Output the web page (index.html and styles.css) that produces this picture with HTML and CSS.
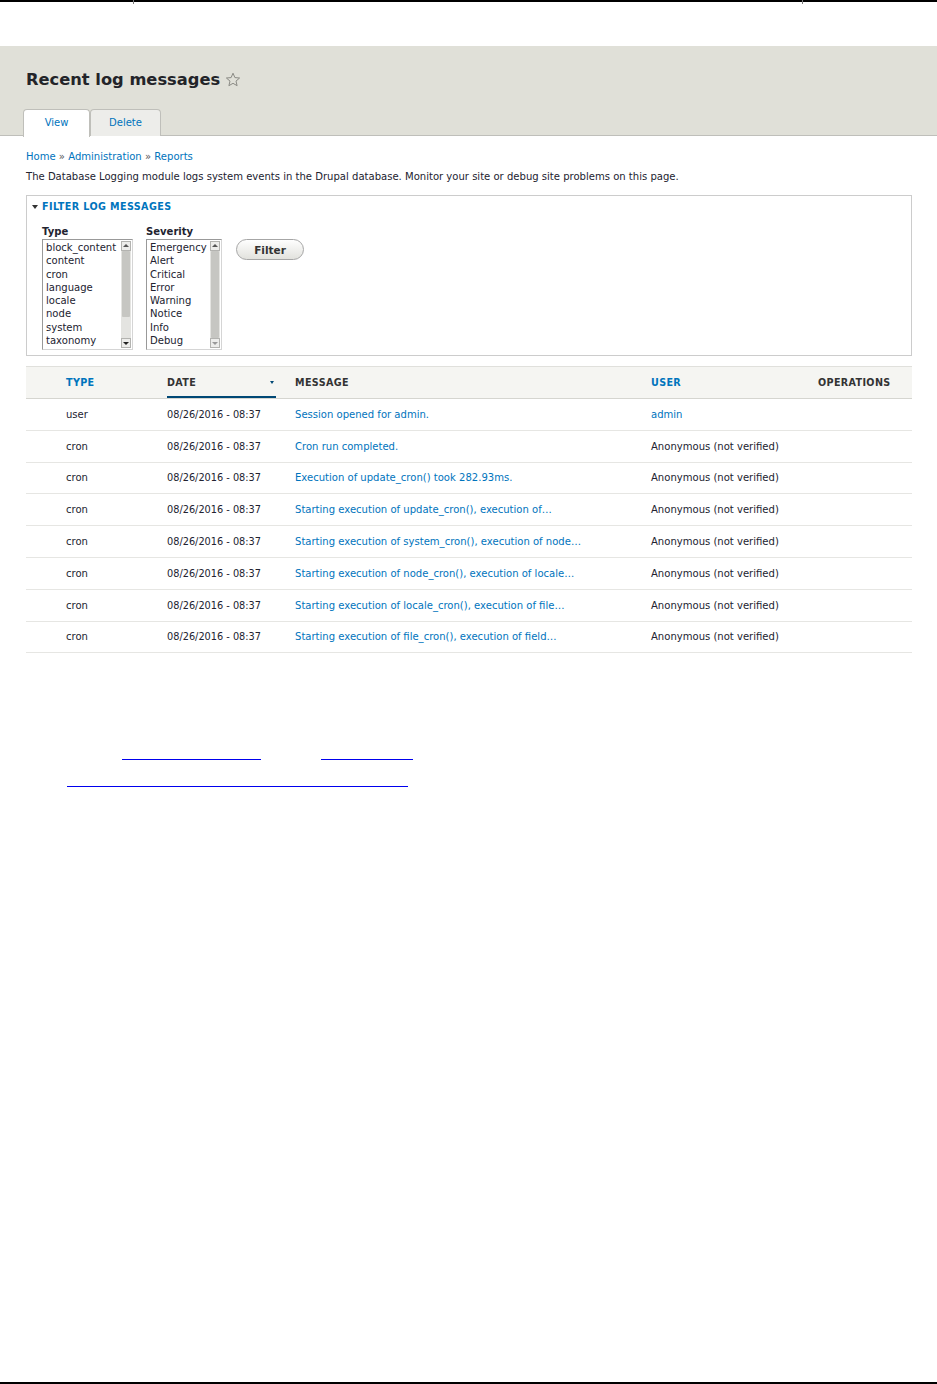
FILE: index.html
```html
<!DOCTYPE html>
<html>
<head>
    <meta charset="UTF-8">
    <title>Recent log messages</title>
    <link rel="stylesheet" href="styles.css">
</head>
<body>
<div class="page">
    <div class="frame-top">
        <span class="seg seg-a"></span>
        <span class="tick"></span>
        <span class="seg seg-b"></span>
        <span class="tick"></span>
        <span class="seg seg-c"></span>
    </div>

    <header class="page-header">
        <h1 class="page-title">Recent log messages
            <svg class="star" viewBox="0 0 16 16" fill="none" stroke="#8a8a84" stroke-width="1" stroke-linejoin="round">
                <path d="M8 1.2l1.9 4.4 4.7.4-3.6 3.1 1.1 4.6L8 11.3l-4.1 2.4 1.1-4.6L1.4 6l4.7-.4z"></path>
            </svg>
        </h1>
        <ul class="tabs">
            <li class="tab is-active"><a href="#">View</a></li>
            <li class="tab"><a href="#">Delete</a></li>
        </ul>
    </header>

    <main class="content">
        <nav class="breadcrumb">
            <a href="#">Home</a> &raquo; <a href="#">Administration</a> &raquo; <a href="#">Reports</a>
        </nav>
        <p class="help">The Database Logging module logs system events in the Drupal database. Monitor your site or debug site problems on this page.</p>

        <fieldset class="filter">
            <div class="legend"><span class="caret"></span>Filter log messages</div>
            <div class="filter-row">
                <div class="field">
                    <label>Type</label>
                    <div class="listbox listbox-type">
                        <ul class="options">
                            <li>block_content</li>
                            <li>content</li>
                            <li>cron</li>
                            <li>language</li>
                            <li>locale</li>
                            <li>node</li>
                            <li>system</li>
                            <li>taxonomy</li>
                        </ul>
                        <div class="scrollbar">
                            <span class="arrow up"></span>
                            <span class="track"><span class="thumb"></span></span>
                            <span class="arrow down"></span>
                        </div>
                    </div>
                </div>
                <div class="field">
                    <label>Severity</label>
                    <div class="listbox listbox-severity">
                        <ul class="options">
                            <li>Emergency</li>
                            <li>Alert</li>
                            <li>Critical</li>
                            <li>Error</li>
                            <li>Warning</li>
                            <li>Notice</li>
                            <li>Info</li>
                            <li>Debug</li>
                        </ul>
                        <div class="scrollbar">
                            <span class="arrow up"></span>
                            <span class="track"><span class="thumb full"></span></span>
                            <span class="arrow down disabled"></span>
                        </div>
                    </div>
                </div>
                <button class="button">Filter</button>
            </div>
        </fieldset>

        <table class="log-table">
            <colgroup>
                <col class="c-type">
                <col class="c-date">
                <col class="c-message">
                <col class="c-user">
                <col class="c-ops">
            </colgroup>
            <thead>
            <tr>
                <th class="col-type"><a href="#">Type</a></th>
                <th class="col-date is-active"><a href="#">Date<span class="sort"></span></a></th>
                <th>Message</th>
                <th><a href="#">User</a></th>
                <th>Operations</th>
            </tr>
            </thead>
            <tbody>
            <tr><td class="col-type">user</td><td class="date">08/26/2016 - 08:37</td><td><a href="#">Session opened for admin.</a></td><td><a href="#">admin</a></td><td></td></tr>
            <tr><td class="col-type">cron</td><td class="date">08/26/2016 - 08:37</td><td><a href="#">Cron run completed.</a></td><td>Anonymous (not verified)</td><td></td></tr>
            <tr><td class="col-type">cron</td><td class="date">08/26/2016 - 08:37</td><td><a href="#">Execution of update_cron() took 282.93ms.</a></td><td>Anonymous (not verified)</td><td></td></tr>
            <tr><td class="col-type">cron</td><td class="date">08/26/2016 - 08:37</td><td><a href="#">Starting execution of update_cron(), execution of…</a></td><td>Anonymous (not verified)</td><td></td></tr>
            <tr><td class="col-type">cron</td><td class="date">08/26/2016 - 08:37</td><td><a href="#">Starting execution of system_cron(), execution of node…</a></td><td>Anonymous (not verified)</td><td></td></tr>
            <tr><td class="col-type">cron</td><td class="date">08/26/2016 - 08:37</td><td><a href="#">Starting execution of node_cron(), execution of locale…</a></td><td>Anonymous (not verified)</td><td></td></tr>
            <tr><td class="col-type">cron</td><td class="date">08/26/2016 - 08:37</td><td><a href="#">Starting execution of locale_cron(), execution of file…</a></td><td>Anonymous (not verified)</td><td></td></tr>
            <tr><td class="col-type">cron</td><td class="date">08/26/2016 - 08:37</td><td><a href="#">Starting execution of file_cron(), execution of field…</a></td><td>Anonymous (not verified)</td><td></td></tr>
            </tbody>
        </table>

        <div class="pager">
            <div class="pager-line first">
                <a href="#" class="blank blank-a"></a>
                <a href="#" class="blank blank-b"></a>
            </div>
            <div class="pager-line second">
                <a href="#" class="blank blank-c"></a>
            </div>
        </div>
    </main>

    <div class="frame-bottom"></div>
</div>
</body>
</html>
```

FILE: styles.css
```css
:root {
    --link-color: #0074bd;
    --text-color: #222330;
    --header-bg: #e0e0d8;
    --border-color: #bfbfba;
}

* {
    box-sizing: border-box;
}

body {
    margin: 0;
    font-family: 'DejaVu Sans', Verdana, sans-serif;
    font-size: 10.05px;
    color: var(--text-color);
    background: white;
}

a {
    color: var(--link-color);
    text-decoration: none;
}

.page {
    display: flex;
    flex-direction: column;
    min-height: 1384px;
}

/* thin frame line on top of the shot */
.frame-top {
    display: flex;
    height: 4px;
    margin-bottom: 42px;
}

.seg {
    border-top: 2px solid #000;
}

.seg-a { width: 133px; }
.seg-b { width: 668px; }
.seg-c { flex: 1; }

.tick {
    width: 1px;
    background: #777;
    height: 4px;
}

.frame-bottom {
    margin-top: auto;
    border-bottom: 2px solid #000;
}

.page-header {
    background: var(--header-bg);
    border-bottom: 1px solid var(--border-color);
    padding: 21px 0 0 23px;
    height: 90px;
}

.page-title {
    margin: 0 0 0 3px;
    font-size: 16.3px;
    font-weight: bold;
    color: #232429;
    line-height: 26px;
    display: flex;
    align-items: center;
    gap: 5px;
}

.star {
    width: 16px;
    height: 16px;
}

.tabs {
    list-style: none;
    margin: 16px 0 0;
    padding: 0;
    display: flex;
}

.tab {
    border: 1px solid var(--border-color);
    border-bottom: none;
    border-radius: 4px 4px 0 0;
    background: #ededea;
    height: 27px;
}

.tab a {
    display: block;
    padding: 7px 0 0;
    font-size: 10px;
    text-align: center;
    width: 69px;
}

.tab.is-active {
    background: white;
    height: 28px;
    margin-bottom: -1px;
}

.tab.is-active a {
    width: 65px;
}

.content {
    padding: 15px 25px 0 26px;
}

.breadcrumb {
    line-height: 12px;
    color: #555;
}

.help {
    margin: 8px 0 12px;
    line-height: 12px;
}

.filter {
    margin: 0;
    border: 1px solid #ccc;
    padding: 5px 0 6px 5px;
    height: 161px;
}

.legend {
    color: var(--link-color);
    font-weight: bold;
    text-transform: uppercase;
    font-size: 9.6px;
    letter-spacing: 0.4px;
    line-height: 12px;
    display: flex;
    align-items: center;
}

.caret {
    width: 0;
    height: 0;
    border-left: 3px solid transparent;
    border-right: 3px solid transparent;
    border-top: 4px solid #333;
    margin: 0 4px 0 0;
}

.filter-row {
    display: flex;
    gap: 13px;
    padding: 13px 0 0 10px;
}

.field label {
    display: block;
    font-weight: bold;
    line-height: 12px;
    margin-bottom: 1px;
}

.listbox {
    display: flex;
    height: 111px;
    border: 1px solid #999;
    border-right-color: #d5d5d5;
    border-bottom-color: #d5d5d5;
    background: white;
    padding: 1px;
}

.listbox-type { width: 91px; }
.listbox-severity { width: 76px; }

.options {
    list-style: none;
    margin: 0;
    padding: 0 0 0 2px;
    flex: 1;
}

.options li {
    line-height: 13.3px;
    white-space: nowrap;
}

.scrollbar {
    width: 10px;
    display: flex;
    flex-direction: column;
    background: #dcdcd8;
}

.arrow {
    height: 10px;
    background: #ededeb;
    border: 1px solid #b3b3b0;
    position: relative;
}

.arrow::after {
    content: "";
    position: absolute;
    left: 1px;
    top: 2px;
    border-left: 3px solid transparent;
    border-right: 3px solid transparent;
}

.arrow.up::after {
    border-bottom: 3px solid #555;
}

.arrow.down::after {
    top: 3px;
    border-top: 3px solid #222;
}

.arrow.down.disabled::after {
    border-top-color: #999;
}

.track {
    flex: 1;
    display: flex;
    flex-direction: column;
    padding: 0 1px;
    background: #e4e4e1;
}

.thumb {
    height: 76%;
    background: #c6c6c2;
    border-radius: 1px;
}

.thumb.full {
    height: 100%;
}

.button {
    align-self: flex-start;
    margin: 13px 0 0 1px;
    font-family: inherit;
    font-size: 10.5px;
    font-weight: bold;
    color: #333;
    padding: 0;
    width: 68px;
    height: 21px;
    border: 1px solid #a6a6a6;
    border-radius: 20px;
    background: linear-gradient(to bottom, #fefefe, #e2e2dd);
}

.log-table {
    width: 100%;
    margin-top: 10px;
    border-collapse: collapse;
    table-layout: fixed;
}

.c-type { width: 129px; }
.c-date { width: 128px; }
.c-message { width: 356px; }
.c-user { width: 167px; }

.log-table th {
    background: #f5f5f2;
    border-top: 1px solid #e0e0dc;
    border-bottom: 1px solid #d5d5d0;
    height: 32px;
    text-align: left;
    font-size: 9.6px;
    font-weight: bold;
    text-transform: uppercase;
    letter-spacing: 0.35px;
    padding: 0 0 0 12px;
    color: #333;
}

.log-table th.is-active {
    padding: 0 7px 0 12px;
}

.log-table th.is-active a {
    display: flex;
    justify-content: space-between;
    align-items: center;
    color: #333;
    height: 30px;
    border-bottom: 2px solid #004875;
    margin-top: 1px;
}

.sort {
    width: 0;
    height: 0;
    border-left: 2.5px solid transparent;
    border-right: 2.5px solid transparent;
    border-top: 3.5px solid #004875;
    margin-right: 2px;
}

.log-table td {
    height: 31.8px;
    border-bottom: 1px solid #e6e6e3;
    padding: 0 0 0 12px;
    white-space: nowrap;
    overflow: hidden;
}

.log-table td.date {
    font-size: 9.75px;
}

.log-table .col-type {
    padding-left: 40px;
}

.pager {
    padding-top: 106px;
}

.pager-line {
    display: flex;
    height: 27px;
}

.blank {
    display: inline-block;
    height: 1px;
    border-bottom: 1px solid #0000ee;
}

.blank-a { width: 139px; margin-left: 96px; }
.blank-b { width: 92px; margin-left: 60px; }
.blank-c { width: 341px; margin-left: 41px; }
```
